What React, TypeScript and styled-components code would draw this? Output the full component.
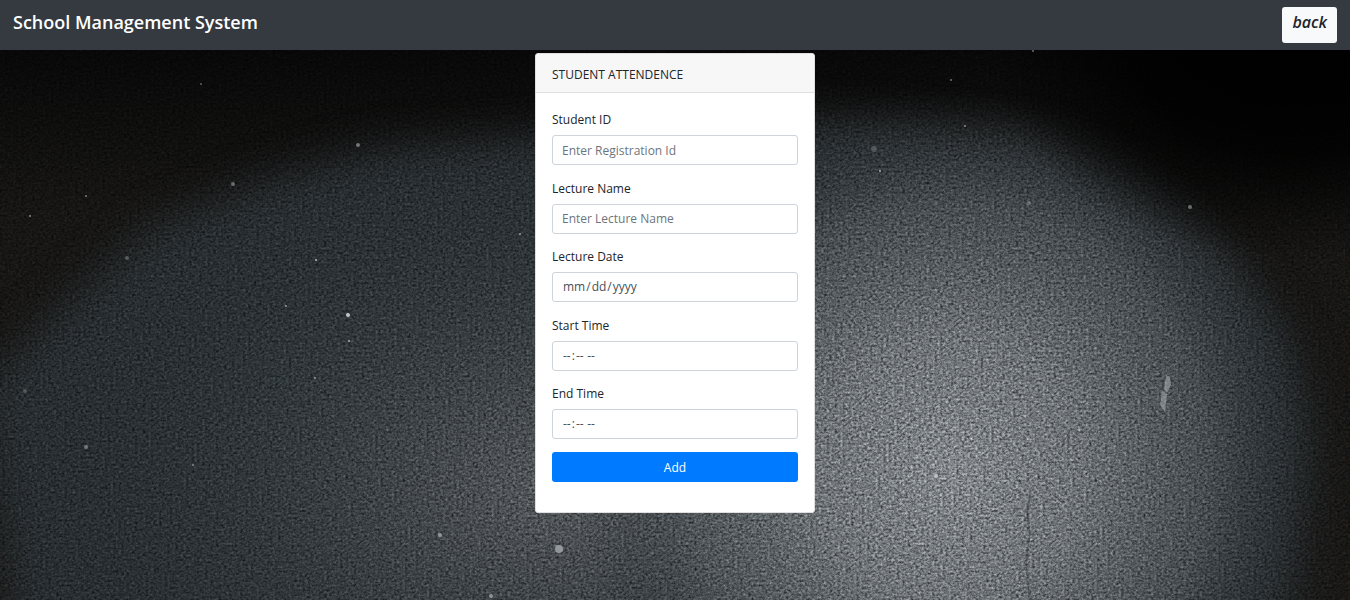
import React from "react";
import styled, { createGlobalStyle } from "styled-components";

const GlobalStyle = createGlobalStyle`
  *, *::before, *::after { box-sizing: border-box; }
  html, body { margin: 0; }
  body {
    font-family: "Segoe UI", "Open Sans", "Noto Sans", sans-serif;
    font-size: 12px;
    line-height: 20px;
    color: #212529;
    background: #000;
  }
`;

const Page = styled.div`
  display: flex;
  flex-direction: column;
  min-height: 100vh;
`;

const Navbar = styled.header`
  display: flex;
  align-items: flex-start;
  justify-content: space-between;
  height: 50px;
  padding: 7px 13px;
  background: #343a40;
`;

const Brand = styled.a`
  color: #fff;
  font-size: 18px;
  font-weight: 600;
  line-height: 30px;
  text-decoration: none;
  white-space: nowrap;
`;

const BackButton = styled.button`
  height: 36px;
  padding: 0 10px 6px;
  border: 0;
  border-radius: 3px;
  background: #f8f9fa;
  color: #212529;
  font-family: inherit;
  font-size: 16px;
  font-style: italic;
  font-weight: 600;
  line-height: 30px;
  cursor: pointer;
`;

const Main = styled.main`
  display: grid;
  flex: 1;
  grid-template: minmax(0, 1fr) / minmax(0, 1fr);
  overflow: hidden;

  > * { grid-area: 1 / 1; }
`;

const WallSvg = styled.svg`
  display: block;
  width: 100%;
  height: 100%;
  min-height: 0;
`;

const Card = styled.section`
  z-index: 1;
  align-self: start;
  justify-self: center;
  width: 280px;
  margin-top: 3px;
  border: 1px solid #dfdfdf;
  border-radius: 3px;
  background: #fff;
`;

const CardHeader = styled.h1`
  margin: 0;
  padding: 11px 16px 7px;
  border-bottom: 1px solid #dfdfdf;
  border-radius: 3px 3px 0 0;
  background: #f7f7f7;
  font-size: 12px;
  font-weight: 400;
  line-height: 20px;
`;

const Form = styled.form`
  padding: 17px 16px 30px;
`;

const FieldList = styled.div`
  display: flex;
  flex-direction: column;
  justify-content: space-between;
  min-height: 329px;
  margin-bottom: 13px;
`;

const Field = styled.div`
  display: flex;
  flex-direction: column;
  gap: 5px;
`;

const Label = styled.label`
  line-height: 20px;
`;

const Input = styled.input`
  width: 100%;
  height: 30px;
  padding: 0 9px;
  border: 1px solid #ced4da;
  border-radius: 3px;
  background: #fff;
  color: #495057;
  font: inherit;

  &::placeholder { color: #6c757d; opacity: 1; }
  &::-webkit-calendar-picker-indicator { display: none; }
`;

const SubmitButton = styled.button`
  width: 100%;
  height: 30px;
  padding: 2px 0 0;
  border: 0;
  border-radius: 3px;
  background: #007bff;
  color: #fff;
  font: inherit;
  cursor: pointer;
`;

const chips: [number, number, number, string][] = [
  [201, 34, 1, "#777"], [358, 95, 2, "#87908c"], [233, 134, 2, "#7b817e"],
  [86, 146, 1, "#999"], [30, 166, 1, "#aaa"], [127, 208, 2, "#656d68"],
  [316, 210, 1, "#d5dadb"], [348, 265, 2, "#e8eced"], [349, 291, 1, "#c8cdce"],
  [286, 256, 1, "#b0b5b6"], [25, 341, 2, "#606360"], [86, 397, 2, "#868b8c"],
  [193, 415, 1, "#a6abac"], [440, 485, 2, "#a4aaab"], [559, 499, 4, "#a4aaab"],
  [491, 546, 2, "#a4aaab"], [227, 565, 1, "#b4babb"], [874, 99, 3, "#5b6466"],
  [880, 121, 1, "#c0c6c8"], [965, 76, 1, "#aaa"], [1033, 1, 1, "#888"],
  [1190, 157, 2, "#808484"], [1029, 153, 2, "#7a8082"], [951, 30, 1, "#888"],
  [936, 426, 2, "#cdd0d1"], [315, 328, 1, "#aaa"], [520, 184, 1, "#bbb"],
];

function ConcreteWall() {
  return (
    <WallSvg viewBox="0 0 1350 550" preserveAspectRatio="xMidYMid slice" aria-hidden="true">
      <defs>
        <filter id="soft" x="-20%" y="-20%" width="140%" height="140%" colorInterpolationFilters="sRGB">
          <feGaussianBlur stdDeviation="20" />
        </filter>
        <filter id="plaster" x="0" y="0" width="100%" height="100%" colorInterpolationFilters="sRGB">
          <feTurbulence type="fractalNoise" baseFrequency="0.37 0.43" numOctaves={3} seed={11} result="noise" />
          <feColorMatrix
            in="noise"
            type="matrix"
            values="0.5 0.5 0 0 0  0.5 0.5 0 0 0  0.5 0.5 0 0 0  0 0 0 0 1"
            result="grain"
          />
          <feComposite in="SourceGraphic" in2="grain" operator="arithmetic" k1={2} k2={0} k3={0} k4={0} />
        </filter>
        <linearGradient id="shade" x1="0" y1="0" x2="0" y2="1">
          <stop offset="0" stopColor="#080808" />
          <stop offset="0.3" stopColor="#171615" />
          <stop offset="1" stopColor="#1a1918" />
        </linearGradient>
        <radialGradient id="glow" gradientUnits="userSpaceOnUse" cx="0" cy="0" r="1" gradientTransform="translate(950 420) scale(370 380)">
          <stop offset="0" stopColor="#82878a" />
          <stop offset="0.35" stopColor="#767b7e" stopOpacity="0.88" />
          <stop offset="0.7" stopColor="#5a6063" stopOpacity="0.6" />
          <stop offset="1" stopColor="#2a3033" stopOpacity="0" />
        </radialGradient>
        <radialGradient id="fill" gradientUnits="userSpaceOnUse" cx="0" cy="0" r="1" gradientTransform="translate(560 440) scale(520 360)">
          <stop offset="0" stopColor="#55595c" />
          <stop offset="0.5" stopColor="#3a4043" stopOpacity="0.7" />
          <stop offset="1" stopColor="#2a3033" stopOpacity="0" />
        </radialGradient>
        <radialGradient id="corner" gradientUnits="userSpaceOnUse" cx="0" cy="0" r="1" gradientTransform="translate(1290 0) scale(300 210)">
          <stop offset="0" stopColor="#000" />
          <stop offset="0.5" stopColor="#000" stopOpacity="0.8" />
          <stop offset="1" stopColor="#000" stopOpacity="0" />
        </radialGradient>
      </defs>
      <g filter="url(#plaster)">
        <rect width="1350" height="550" fill="url(#shade)" />
        <path
          d="M-20 340 L60 260 L150 180 L270 130 L380 100 L530 88 L700 70 L880 72 L1040 90 L1140 140 L1230 210 L1290 290 L1310 390 L1290 570 L20 600 Z"
          fill="#282e31"
          filter="url(#soft)"
        />
        <rect width="1350" height="550" fill="url(#fill)" />
        <rect width="1350" height="550" fill="url(#glow)" />
        <rect width="1350" height="550" fill="url(#corner)" />
      </g>
      {chips.map(([x, y, r, color]) => (
        <circle key={`${x}-${y}`} cx={x} cy={y} r={r} fill={color} opacity={0.8} />
      ))}
      <path d="M1166 325 l4 2 1 8 -4 8 -3 -4z M1162 340 l5 4 -2 18 -5 -7z" fill="#a2a8aa" opacity="0.6" />
      <g fill="none" stroke="#15191b" opacity="0.3">
        <path d="M1030 445 l-3 18 3 20 -4 24 3 40" strokeWidth="2" />
        <path d="M1070 380 l-8 16 -6 12 M1048 358 l6 12 M980 270 l14 -4 M1002 312 l12 -3" />
        <path d="M1135 363 l20 4 22 10 M1145 160 l24 8" />
        <path d="M430 548 l30 -8 20 -12" />
      </g>
    </WallSvg>
  );
}

const fields = [
  { id: "student-id", label: "Student ID", type: "text", placeholder: "Enter Registration Id" },
  { id: "lecture-name", label: "Lecture Name", type: "text", placeholder: "Enter Lecture Name" },
  { id: "lecture-date", label: "Lecture Date", type: "date" },
  { id: "start-time", label: "Start Time", type: "time" },
  { id: "end-time", label: "End Time", type: "time" },
];

export default function App() {
  return (
    <Page>
      <GlobalStyle />
      <Navbar>
        <Brand href="#">School Management System</Brand>
        <BackButton type="button">back</BackButton>
      </Navbar>
      <Main>
        <ConcreteWall />
        <Card>
          <CardHeader>STUDENT ATTENDENCE</CardHeader>
          <Form onSubmit={(event) => event.preventDefault()}>
            <FieldList>
              {fields.map(({ id, label, type, placeholder }) => (
                <Field key={id}>
                  <Label htmlFor={id}>{label}</Label>
                  <Input id={id} name={id} type={type} placeholder={placeholder} />
                </Field>
              ))}
            </FieldList>
            <SubmitButton type="submit">Add</SubmitButton>
          </Form>
        </Card>
      </Main>
    </Page>
  );
}
